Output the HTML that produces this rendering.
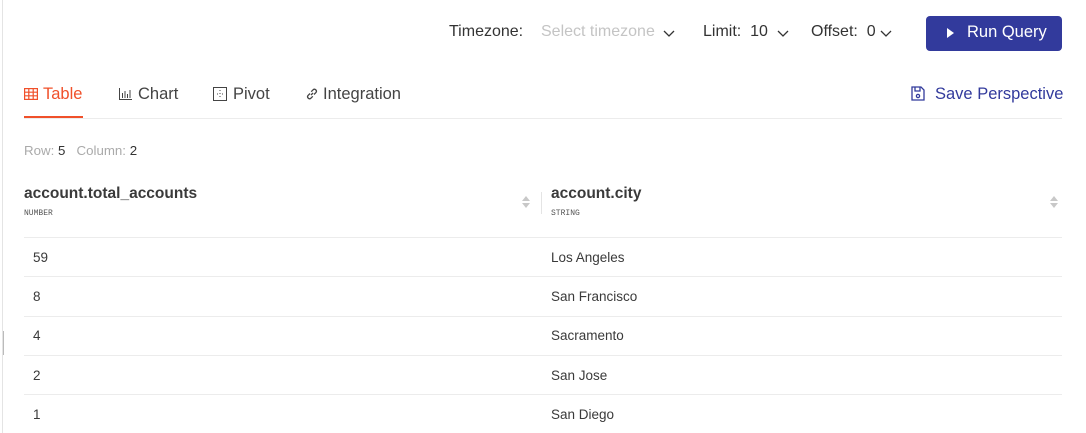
<!DOCTYPE html>
<html><head><style>
body{margin:0;width:1086px;height:433px;background:#fff;font-family:"Liberation Sans",sans-serif;position:relative;overflow:hidden;color:#333}
.a{position:absolute;white-space:nowrap}
.line{position:absolute;height:1px;background:#ececec}
.sort{position:absolute;width:8px}
.sort:before{content:"";position:absolute;left:0;top:0;border:4px solid transparent;border-bottom:5px solid #c8c8c8;border-top:0}
.sort:after{content:"";position:absolute;left:0;top:7px;border:4px solid transparent;border-top:5px solid #c8c8c8;border-bottom:0}
.cell{font-size:13.5px;color:#3a3a3a}
</style></head><body>
<div class="a" style="left:2px;top:0;width:1px;height:433px;background:#e4e4e4"></div>
<div class="a" style="left:3px;top:331px;width:1px;height:24px;background:#bbb"></div>

<div class="a" style="left:449px;top:23px;font-size:16px;color:#333">Timezone:</div>
<div class="a" style="left:541px;top:23px;font-size:16px;color:#c4c4c4">Select timezone</div>
<svg class="a" style="left:663px;top:30px" width="12" height="8"><path d="M1 1l5 5 5-5" fill="none" stroke="#333" stroke-width="1.3"/></svg>
<div class="a" style="left:703px;top:23px;font-size:16px;color:#333">Limit:&nbsp; 10</div>
<svg class="a" style="left:777px;top:30px" width="12" height="8"><path d="M1 1l5 5 5-5" fill="none" stroke="#333" stroke-width="1.3"/></svg>
<div class="a" style="left:811px;top:23px;font-size:16px;color:#333">Offset:&nbsp; 0</div>
<svg class="a" style="left:880px;top:30px" width="12" height="8"><path d="M1 1l5 5 5-5" fill="none" stroke="#333" stroke-width="1.3"/></svg>
<div class="a" style="left:926px;top:16px;width:136px;height:35px;background:#323a9c;border-radius:4px"></div>
<svg class="a" style="left:947px;top:28px" width="8" height="10"><path d="M0 0l7 5-7 5z" fill="#fff"/></svg>
<div class="a" style="left:967px;top:23px;font-size:16.5px;color:#fff;line-height:19px">Run Query</div>

<svg class="a" style="left:24px;top:88px" width="14" height="12"><g fill="none" stroke="#f0502a" stroke-width="1.2"><rect x=".6" y=".6" width="12.8" height="10.8"/><path d="M.6 4.2h12.8M.6 7.8h12.8M4.8.6v10.8M9.2.6v10.8"/></g></svg>
<div class="a" style="left:43px;top:85px;font-size:16.5px;color:#f0502a">Table</div>
<div class="a" style="left:24px;top:116px;width:59px;height:3px;background:#f0502a"></div>
<svg class="a" style="left:119px;top:88px" width="13" height="12"><path d="M.5 0v11.5H13M3.5 5v5M6 3v7M8.5 6v4M11 2v8" fill="none" stroke="#444" stroke-width="1"/></svg>
<div class="a" style="left:138px;top:85px;font-size:16.5px;color:#444">Chart</div>
<svg class="a" style="left:213px;top:87px" width="14" height="14"><rect x=".5" y=".5" width="13" height="13" fill="none" stroke="#444"/><path d="M7 3v1M7 6v1M7 9v1M4 7h1M9 7h1" stroke="#444"/></svg>
<div class="a" style="left:233px;top:85px;font-size:16.5px;color:#444">Pivot</div>
<svg class="a" style="left:305px;top:87px" width="14" height="14"><g fill="none" stroke="#444" stroke-width="1.3"><path d="M6 8l2-2"/><path d="M5 6.5L3 8.5a2 2 0 0 0 2.8 2.8L7.8 9.3"/><path d="M9 7.5l2-2A2 2 0 0 0 8.2 2.7L6.2 4.7"/></g></svg>
<div class="a" style="left:323px;top:85px;font-size:16.5px;color:#444">Integration</div>
<svg class="a" style="left:911px;top:86px" width="14" height="15"><g fill="none" stroke="#323a9c" stroke-width="1.3"><path d="M1 1h9l3 3v10H1z"/><path d="M4 1v4h5V1"/><circle cx="7" cy="10" r="1.6"/></g></svg>
<div class="a" style="left:935px;top:85px;font-size:16.5px;color:#323a9c">Save Perspective</div>
<div class="line" style="left:24px;top:118px;width:1038px"></div>

<div class="a" style="left:24px;top:143px;font-size:13.3px;color:#aaa">Row: <span style="color:#333">5</span>&nbsp;&nbsp; Column: <span style="color:#333">2</span></div>

<div class="a" style="left:24px;top:185px;font-size:15.5px;font-weight:bold;color:#3a3a3a">account.total_accounts</div>
<div class="a" style="left:24px;top:209px;font-size:8px;font-family:'Liberation Mono',monospace;color:#555">NUMBER</div>
<div class="sort" style="left:522px;top:196px"></div>
<div class="a" style="left:541px;top:192px;width:1px;height:22px;background:#e4e4e4"></div>
<div class="a" style="left:551px;top:185px;font-size:15.5px;font-weight:bold;color:#3a3a3a">account.city</div>
<div class="a" style="left:551px;top:209px;font-size:8px;font-family:'Liberation Mono',monospace;color:#555">STRING</div>
<div class="sort" style="left:1050px;top:196px"></div>

<div class="line" style="left:24px;top:237px;width:1038px"></div>
<div class="a cell" style="left:33px;top:250px">59</div><div class="a cell" style="left:551px;top:250px">Los Angeles</div>
<div class="line" style="left:24px;top:276px;width:1038px"></div>
<div class="a cell" style="left:33px;top:289px">8</div><div class="a cell" style="left:551px;top:289px">San Francisco</div>
<div class="line" style="left:24px;top:316px;width:1038px"></div>
<div class="a cell" style="left:33px;top:328px">4</div><div class="a cell" style="left:551px;top:328px">Sacramento</div>
<div class="line" style="left:24px;top:355px;width:1038px"></div>
<div class="a cell" style="left:33px;top:368px">2</div><div class="a cell" style="left:551px;top:368px">San Jose</div>
<div class="line" style="left:24px;top:394px;width:1038px"></div>
<div class="a cell" style="left:33px;top:407px">1</div><div class="a cell" style="left:551px;top:407px">San Diego</div>
</body></html>
